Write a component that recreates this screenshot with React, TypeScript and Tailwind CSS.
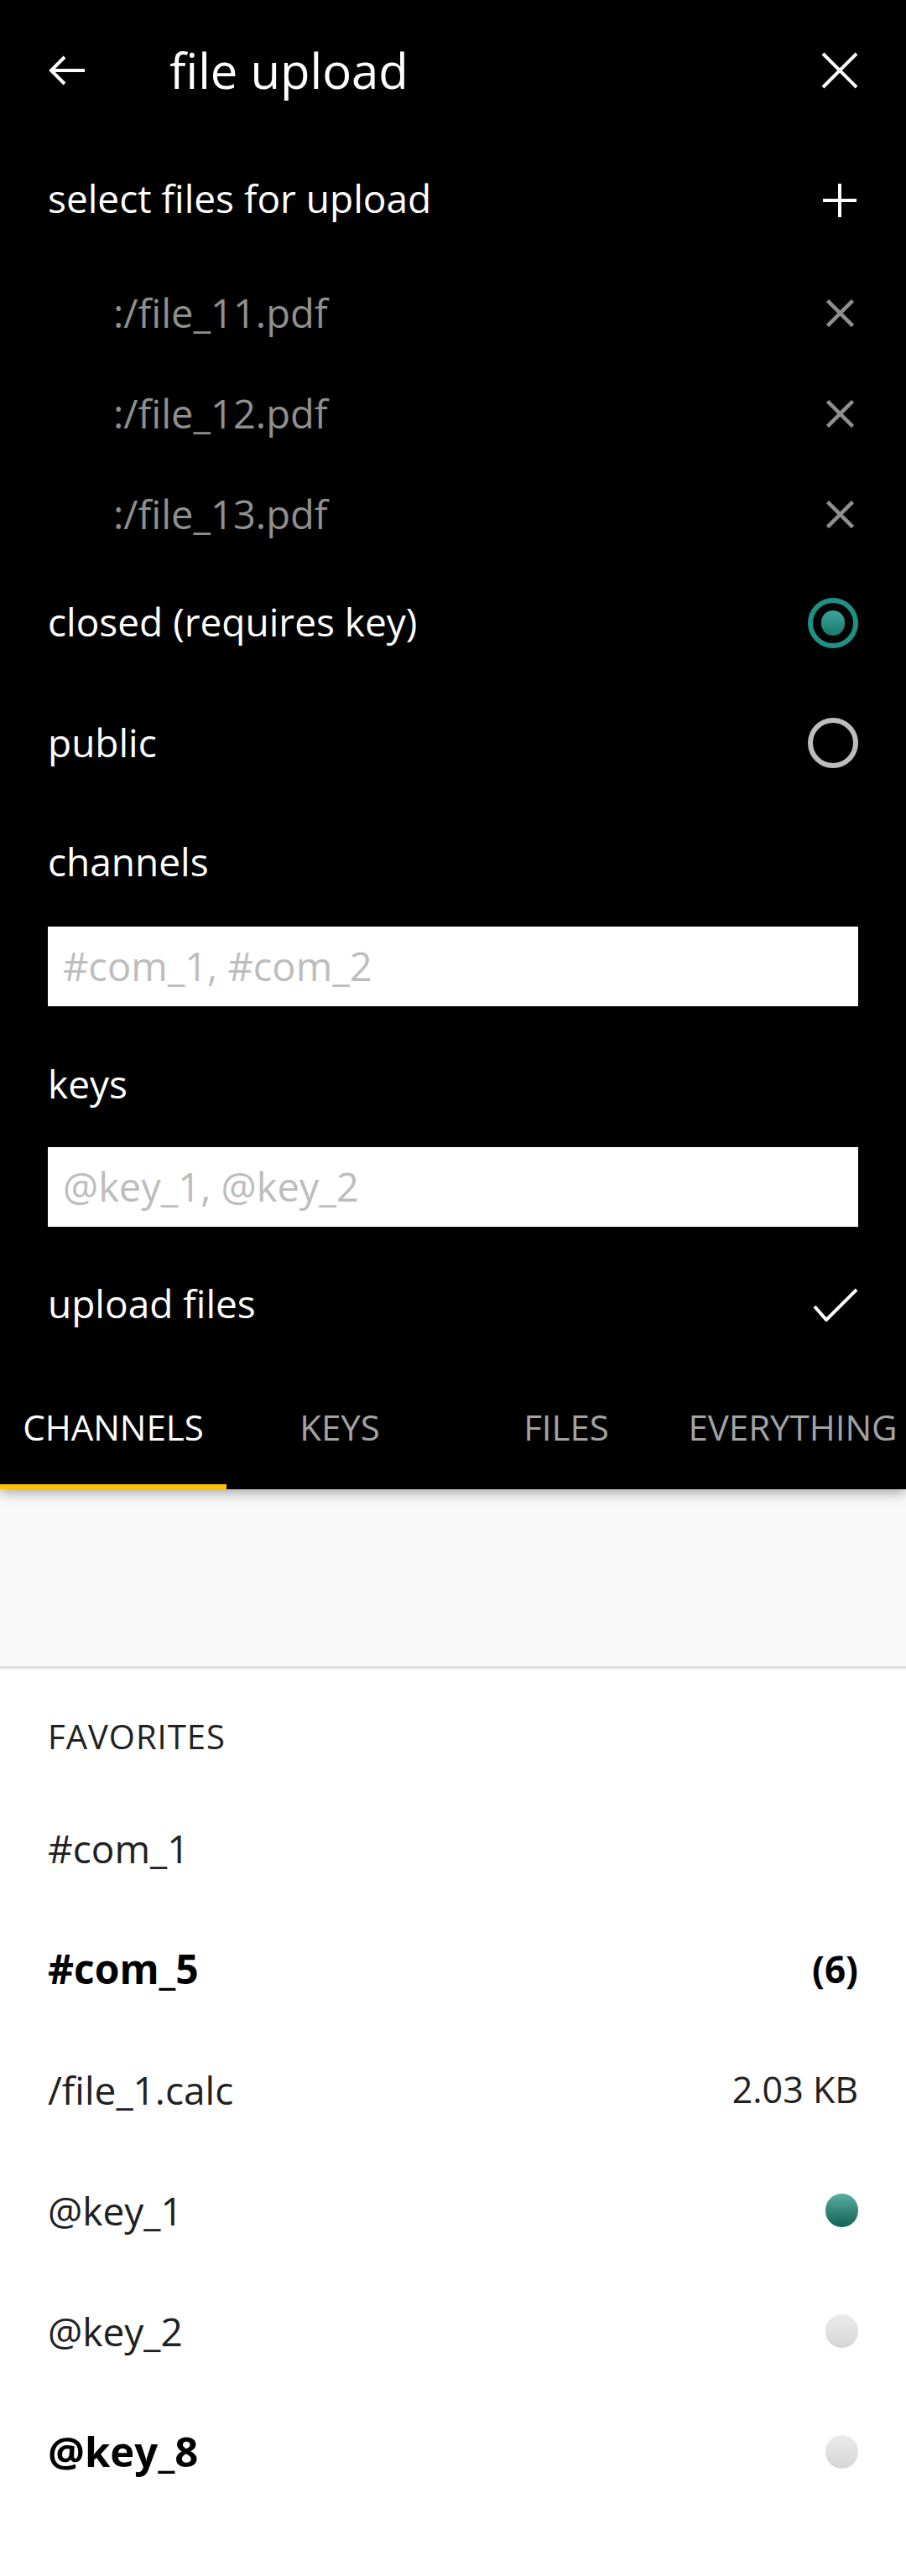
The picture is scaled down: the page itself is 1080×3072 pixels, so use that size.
import React from 'react';

const font = "font-['Open_Sans','Noto_Sans',sans-serif]";

const files = [':/file_11.pdf', ':/file_12.pdf', ':/file_13.pdf'];
const tabs = ['CHANNELS', 'KEYS', 'FILES', 'EVERYTHING'];

const XIcon = ({ size, stroke, className }: { size: number; stroke: number; className?: string }) => (
  <svg width={size} height={size} viewBox="0 0 22 22" fill="none" stroke="currentColor" strokeWidth={stroke} className={className}>
    <path d="M1 1L21 21M21 1L1 21" />
  </svg>
);

const Dot = ({ on }: { on: boolean }) => (
  <span
    className={
      on
        ? 'block w-[39px] h-[40px] rounded-full bg-gradient-to-b from-[#5aaea2] to-[#0b6356]'
        : 'block w-[39px] h-[40px] rounded-full bg-gradient-to-b from-[#ebebeb] to-[#d6d6d6]'
    }
  />
);

export default function App() {
  return (
    <div className={`w-[1080px] h-[3072px] bg-white ${font}`}>
      <div className="bg-black text-white">
        {/* header */}
        <div className="h-[168px] flex items-center pl-[57px] pr-[57px]">
          <svg width="48" height="48" viewBox="0 0 24 24" fill="none" stroke="white" strokeWidth="2">
            <path d="M22 12H2M10 4l-8 8 8 8" />
          </svg>
          <span className="ml-[97px] text-[58px] leading-none flex-1">file upload</span>
          <XIcon size={44} stroke={2} className="text-white" />
        </div>

        <div className="h-[145px] flex items-center justify-between px-[57px] pb-[8px]">
          <span className="text-[46px]">select files for upload</span>
          <svg width="44" height="44" viewBox="0 0 22 22" fill="none" stroke="white" strokeWidth="2" className="mt-[4px]">
            <path d="M11 1V21M1 11H21" />
          </svg>
        </div>

        {files.map((f) => (
          <div key={f} className="h-[120px] flex items-center justify-between pl-[135px] pr-[62px]">
            <span className="text-[47px] text-[#8f8f8f]">{f}</span>
            <XIcon size={33} stroke={3} className="text-[#8f8f8f]" />
          </div>
        ))}

        <div className="h-[140px] flex items-center justify-between px-[57px]">
          <span className="text-[46px] -mt-[4px]">closed (requires key)</span>
          <span className="w-[60px] h-[60px] rounded-full border-[6px] border-[#1f9184] flex items-center justify-center">
            <span className="w-[28px] h-[30px] rounded-full bg-gradient-to-b from-[#3fa598] to-[#137a6d]" />
          </span>
        </div>

        <div className="h-[145px] flex items-center justify-between px-[57px]">
          <span className="text-[46px]">public</span>
          <span className="w-[60px] h-[60px] rounded-full border-[6px] border-[#bdbdbd]" />
        </div>

        <div className="h-[147px] flex items-center px-[57px] pb-[9px]">
          <span className="text-[46px]">channels</span>
        </div>
        <div className="px-[57px]">
          <div className="h-[95px] bg-white flex items-center px-[18px]">
            <span className="text-[47px] text-[#bdbdbd]">#com_1, #com_2</span>
          </div>
        </div>

        <div className="h-[168px] flex items-center px-[57px] pt-[16px]">
          <span className="text-[46px]">keys</span>
        </div>
        <div className="px-[57px]">
          <div className="h-[95px] bg-white flex items-center px-[18px]">
            <span className="text-[47px] text-[#bdbdbd]">@key_1, @key_2</span>
          </div>
        </div>

        <div className="h-[186px] flex items-center justify-between px-[57px]">
          <span className="text-[46px] -mt-[4px]">upload files</span>
          <svg width="54" height="40" viewBox="0 0 54 40" fill="none" stroke="white" strokeWidth="4">
            <path d="M2 22L16 38L52 2" />
          </svg>
        </div>

        {/* tabs */}
        <div className="relative z-10 flex shadow-[0_4px_14px_rgba(0,0,0,0.35)]">
          {tabs.map((t, i) => (
            <div key={t} className="w-[270px] h-[127px] flex flex-col">
              <div className="flex-1 flex items-center justify-center pb-[17px]">
                <span className={i === 0 ? 'text-[42px] text-white' : 'text-[42px] text-[#a3a3a3]'}>{t}</span>
              </div>
              <div className={i === 0 ? 'h-[6px] bg-[#ffc107]' : 'h-[6px]'} />
            </div>
          ))}
        </div>
      </div>

      <div className="h-[214px] bg-[#f9f9f9] border-b-[3px] border-[#dedede]" />

      <div className="text-[#212121]">
        <div className="h-[142px] flex items-center px-[57px] pt-[20px]">
          <span className="text-[40px] tracking-[1px]">FAVORITES</span>
        </div>

        <div className="h-[144px] flex items-center justify-between px-[57px]">
          <span className="text-[46px]">#com_1</span>
        </div>
        <div className="h-[144px] flex items-center justify-between px-[57px]">
          <span className="text-[48px] font-bold text-black">#com_5</span>
          <span className="text-[44px] font-bold text-black">(6)</span>
        </div>
        <div className="h-[144px] flex items-center justify-between px-[57px]">
          <span className="text-[46px]">/file_1.calc</span>
          <span className="text-[43px]">2.03 KB</span>
        </div>
        <div className="h-[144px] flex items-center justify-between px-[57px]">
          <span className="text-[46px]">@key_1</span>
          <Dot on />
        </div>
        <div className="h-[144px] flex items-center justify-between px-[57px]">
          <span className="text-[46px]">@key_2</span>
          <Dot on={false} />
        </div>
        <div className="h-[144px] flex items-center justify-between px-[57px]">
          <span className="text-[49px] font-bold text-black">@key_8</span>
          <Dot on={false} />
        </div>
      </div>
    </div>
  );
}
